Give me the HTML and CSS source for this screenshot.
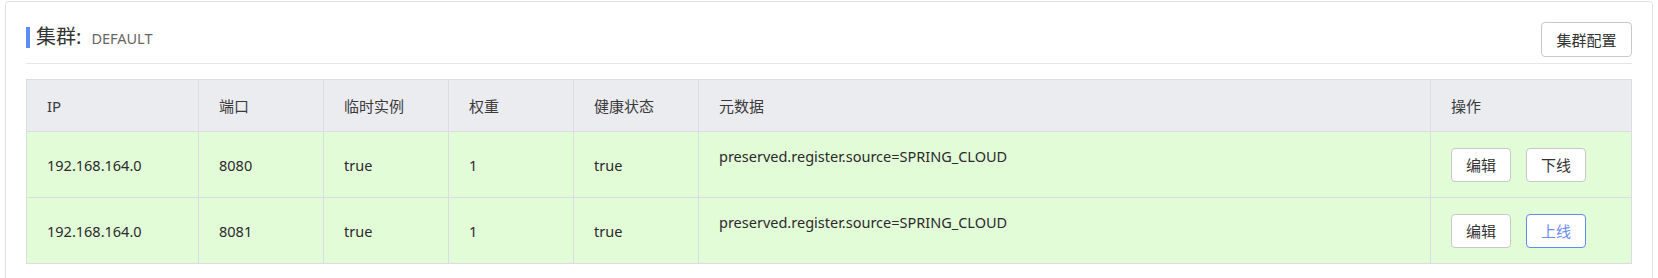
FILE: index.html
```html
<!DOCTYPE html>
<html lang="zh-CN">
<head>
    <meta charset="UTF-8">
    <meta name="viewport" content="width=device-width, initial-scale=1.0">
    <title>集群</title>
    <link rel="stylesheet" href="styles.css">
</head>
<body>
    <div class="cluster-card">
        <div class="cluster-header">
            <div class="cluster-title">集群:<span class="cluster-name">DEFAULT</span></div>
            <button class="btn btn-config">集群配置</button>
        </div>

        <table class="instance-table">
            <colgroup>
                <col class="c-ip">
                <col class="c-port">
                <col class="c-eph">
                <col class="c-weight">
                <col class="c-health">
                <col class="c-meta">
                <col class="c-ops">
            </colgroup>
            <thead>
                <tr>
                    <th>IP</th>
                    <th>端口</th>
                    <th>临时实例</th>
                    <th>权重</th>
                    <th>健康状态</th>
                    <th>元数据</th>
                    <th>操作</th>
                </tr>
            </thead>
            <tbody>
                <tr>
                    <td>192.168.164.0</td>
                    <td>8080</td>
                    <td>true</td>
                    <td>1</td>
                    <td>true</td>
                    <td class="meta">preserved.register.source=SPRING_CLOUD</td>
                    <td>
                        <div class="ops">
                            <button class="btn btn-small">编辑</button>
                            <button class="btn btn-small">下线</button>
                        </div>
                    </td>
                </tr>
                <tr>
                    <td>192.168.164.0</td>
                    <td>8081</td>
                    <td>true</td>
                    <td>1</td>
                    <td>true</td>
                    <td class="meta">preserved.register.source=SPRING_CLOUD</td>
                    <td>
                        <div class="ops">
                            <button class="btn btn-small">编辑</button>
                            <button class="btn btn-small btn-online">上线</button>
                        </div>
                    </td>
                </tr>
            </tbody>
        </table>
    </div>
</body>
</html>
```

FILE: styles.css
```css
body {
    margin: 0;
    background: #fff;
    font-family: "Noto Sans", "Noto Sans CJK SC", sans-serif;
    color: #2b2b2b;
}
.cluster-card {
    margin: 1px 0 0 5px;
    width: 1606px;
    padding: 0 20px 40px;
    border: 1px solid #e2e2e2;
    border-radius: 4px;
}
.cluster-header {
    display: flex;
    justify-content: space-between;
    align-items: flex-start;
    padding: 20px 0 6px;
    border-bottom: 1px solid #e6e6e6;
}
.cluster-title {
    margin-top: 5px;
    border-left: 4px solid #5b8cf7;
    padding-left: 6px;
    font-size: 20px;
    line-height: 20px;
    color: #333;
}
.cluster-name {
    font-size: 14.5px;
    color: #666;
    margin-left: 10px;
}
.btn {
    font-family: inherit;
    background: #fff;
    border: 1px solid #c8c8c8;
    border-radius: 4px;
    color: #333;
    cursor: pointer;
    padding: 0;
}
.btn-config {
    width: 91px;
    height: 35px;
    font-size: 15px;
}
.instance-table {
    margin-top: 15px;
    width: 1605px;
    border-collapse: collapse;
    table-layout: fixed;
    font-size: 14.5px;
}
.c-ip { width: 172px; }
.c-port, .c-eph, .c-weight, .c-health { width: 125px; }
.c-meta { width: 732px; }
.c-ops { width: 201px; }
.instance-table th,
.instance-table td {
    border: 1px solid #dcdde2;
    padding: 0 20px;
    text-align: left;
    font-weight: normal;
    line-height: 20px;
}
.instance-table thead tr {
    height: 52px;
}
.instance-table tbody tr {
    height: 66px;
}
.instance-table th {
    background: #ebecf0;
    font-size: 15px;
    color: #3a3a3a;
}
.instance-table td {
    background: #e2fcd8;
}
.instance-table td.meta {
    vertical-align: top;
    padding-top: 14px;
}
.ops {
    display: flex;
    gap: 15px;
}
.btn-small {
    width: 60px;
    height: 34px;
    font-size: 15px;
}
.btn-online {
    border-color: #5b8cf7;
    color: #6b8ef5;
}
```
